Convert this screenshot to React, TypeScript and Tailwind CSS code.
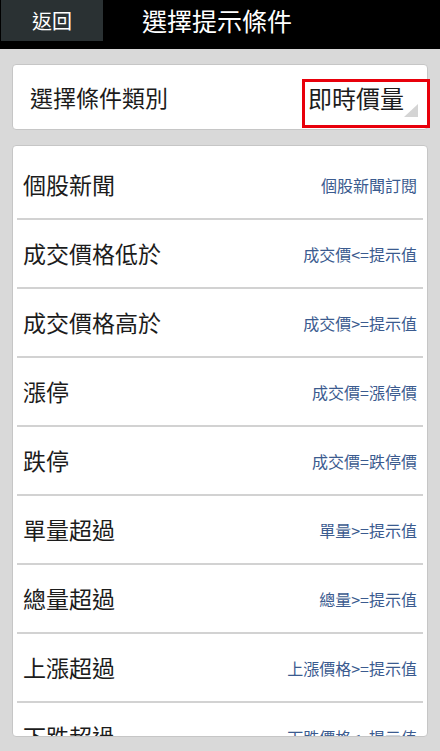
const rows = [
    { name: '個股新聞', hint: '個股新聞訂閱' },
    { name: '成交價格低於', hint: '成交價<=提示值' },
    { name: '成交價格高於', hint: '成交價>=提示值' },
    { name: '漲停', hint: '成交價=漲停價' },
    { name: '跌停', hint: '成交價=跌停價' },
    { name: '單量超過', hint: '單量>=提示值' },
    { name: '總量超過', hint: '總量>=提示值' },
    { name: '上漲超過', hint: '上漲價格>=提示值' },
    { name: '下跌超過', hint: '下跌價格<=提示值' },
]

const font = { fontFamily: '"Noto Sans CJK TC", "Noto Sans", sans-serif' }

export default function App() {
    return (
        <div style={font} className="w-[440px] h-[751px] bg-[#d9d9d9] flex flex-col overflow-hidden">
            {/* header */}
            <div className="h-[49px] bg-black flex items-start shrink-0">
                <button className="ml-[1px] w-[102px] h-[41px] bg-[#2a3133] text-white text-[20px] leading-none flex items-center justify-center">
                    返回
                </button>
                <div className="h-[41px] ml-[39px] flex items-center text-white text-[25px] leading-none">
                    選擇提示條件
                </div>
            </div>

            <div className="flex-1 flex flex-col px-[12px] pt-[15px] pb-[14px] gap-[15px] min-h-0">
                {/* category */}
                <div className="relative h-[66px] shrink-0 bg-white border border-[#c6c6c6] rounded-[4px] flex items-center pl-[17px]">
                    <span className="text-[23px] text-[#1c1c1c] leading-none">選擇條件類別</span>
                    <div className="absolute right-[-3px] top-[14px] w-[128px] h-[49px] border-[3px] border-[#e8000b] flex items-center pl-[3px]">
                        <span className="text-[24px] text-[#1c1c1c] leading-none -mt-[11px]">即時價量</span>
                        <svg className="absolute right-[9px] bottom-[8px]" width="14" height="13" viewBox="0 0 14 13">
                            <polygon points="14,0 14,13 0,13" fill="#d4d4d4" />
                        </svg>
                    </div>
                </div>

                {/* condition list */}
                <div className="flex-1 min-h-0 overflow-hidden bg-white border border-[#c6c6c6] rounded-[4px] pt-[5px]">
                    {rows.map((r, i) => (
                        <div key={i}>
                            <div className="h-[67px] flex items-center justify-between pl-[10px] pr-[10px]">
                                <span className="text-[23px] text-[#1c1c1c] leading-none">{r.name}</span>
                                <span className="text-[16px] text-[#3b5b8f] leading-none">{r.hint}</span>
                            </div>
                            {i < rows.length - 1 && <div className="mx-[4px] h-[2px] bg-[#d2d2d2]" />}
                        </div>
                    ))}
                </div>
            </div>
        </div>
    )
}
